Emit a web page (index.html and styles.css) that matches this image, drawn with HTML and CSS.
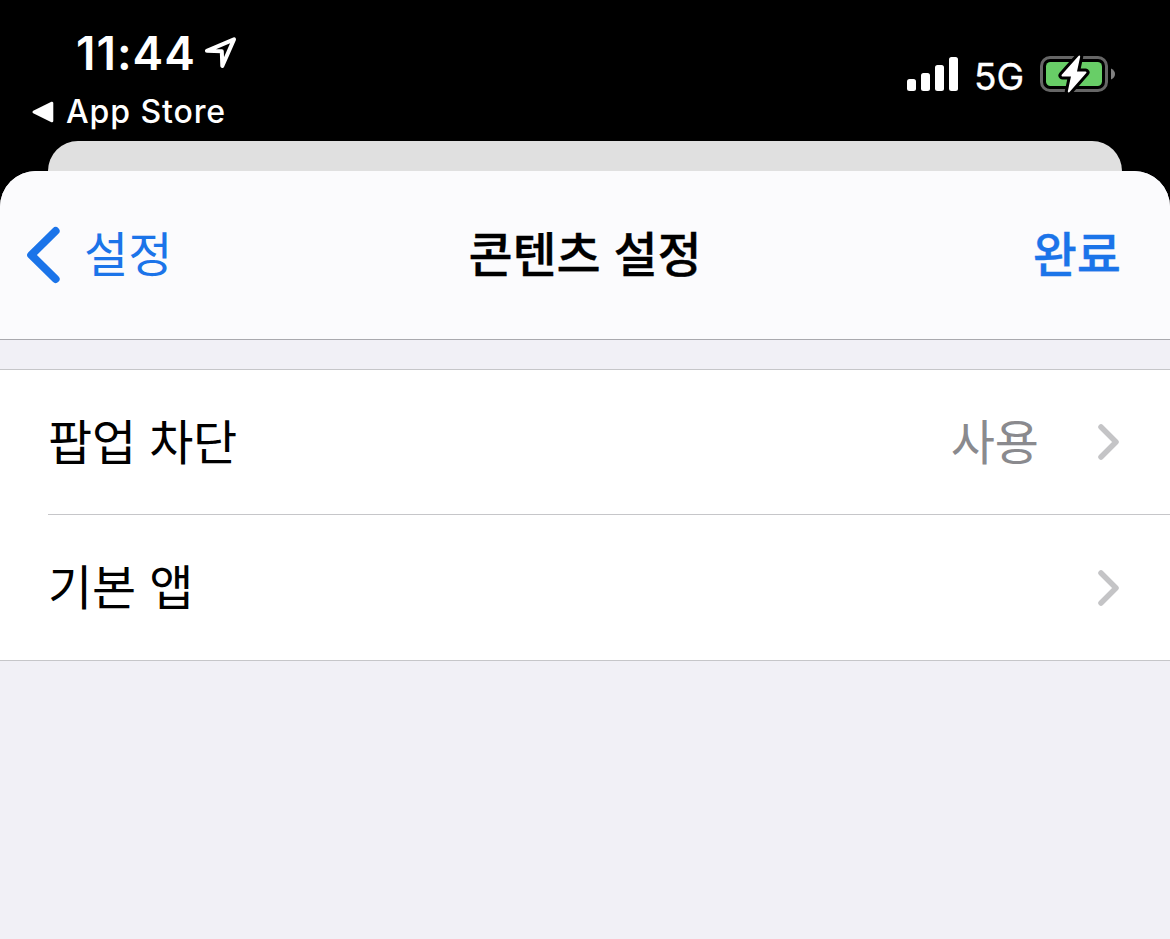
FILE: index.html
```html
<!DOCTYPE html>
<html lang="ko">
  <head>
    <meta charset="UTF-8">
    <title>콘텐츠 설정</title>
    <link rel="stylesheet" href="styles.css">
  </head>
  <body>
    <div class="status-bar">
      <div class="status-left">
        <div class="time-row">
          <span class="time">11:44</span>
          <svg class="location" width="34" height="34" viewBox="0 0 34 34">
            <path d="M2.9 14.8 L30 3.4 L18.3 30 L17.8 15.2 Z" />
          </svg>
        </div>
        <div class="return-app">
          <svg width="22" height="22" viewBox="0 0 22 22">
            <path d="M1.8 11 L20 2 V20 Z" fill="#fff" stroke="#fff" stroke-width="2.6" stroke-linejoin="round" />
          </svg>
          <span>App Store</span>
        </div>
      </div>
      <div class="status-right">
        <svg class="signal" width="52" height="34" viewBox="0 0 52 34">
          <rect x="0" y="22" width="9" height="12" rx="2.5" />
          <rect x="14" y="16" width="9" height="18" rx="2.5" />
          <rect x="28" y="8" width="9" height="26" rx="2.5" />
          <rect x="42" y="0" width="9" height="34" rx="2.5" />
        </svg>
        <span class="network">5G</span>
        <svg class="battery" width="76" height="40" viewBox="0 0 76 40">
          <rect x="1.5" y="3.5" width="65" height="33" rx="8.5" fill="none" stroke="#666" stroke-width="3" />
          <rect x="6" y="8" width="56" height="24" rx="4.5" fill="#68ce67" />
          <path d="M71 14.5 Q75 16.5 75 20 Q75 23.5 71 25.5 Z" fill="#808080" />
          <path class="bolt-edge" d="M39.2 2.6 L22.5 21.4 H32.2 L28.8 37.4 L45.5 18.4 H35.8 Z" />
          <path class="bolt" d="M39.2 2.6 L22.5 21.4 H32.2 L28.8 37.4 L45.5 18.4 H35.8 Z" />
        </svg>
      </div>
    </div>

    <!-- Card behind the sheet -->
    <div class="back-card"></div>

    <div class="sheet">
      <div class="nav">
        <div class="back">
          <svg width="34" height="58" viewBox="0 0 34 58">
            <path d="M29.6 5 L5.2 29 L29.6 53" />
          </svg>
          <span>설정</span>
        </div>
        <h1>콘텐츠 설정</h1>
        <div class="done">완료</div>
      </div>

      <div class="list">
        <div class="row">
          <span class="label">팝업 차단</span>
          <span class="value">사용</span>
          <svg class="chevron" width="22" height="38" viewBox="0 0 22 38">
            <path d="M3 4 L18 19 L3 34" />
          </svg>
        </div>
        <div class="row">
          <span class="label">기본 앱</span>
          <svg class="chevron" width="22" height="38" viewBox="0 0 22 38">
            <path d="M3 4 L18 19 L3 34" />
          </svg>
        </div>
      </div>
    </div>
  </body>
</html>
```

FILE: styles.css
```css
body, h1 {
  margin: 0;
  padding: 0;
}

* {
  box-sizing: border-box;
}

body {
  display: flex;
  flex-direction: column;
  height: 939px;
  overflow: hidden;
  background-color: #000;
  color: #000;
  font-family: "Noto Sans CJK KR", sans-serif;
  font-size: 48px;
}

svg {
  display: block;
  flex-shrink: 0;
}

/* Status bar */
.status-bar {
  display: flex;
  justify-content: space-between;
  height: 141px;
  color: #fff;
  font-family: Inter, sans-serif;
}

.time-row {
  display: flex;
  padding: 24px 0 0 76px;
  height: 84px;
  gap: 10px;
}

.time {
  width: 118px;
  font-size: 46px;
  font-weight: 600;
  line-height: 59px;
  letter-spacing: 1px;
  white-space: nowrap;
}

.location {
  margin-top: 12px;
}

.location path {
  fill: none;
  stroke: #fff;
  stroke-width: 4;
  stroke-linejoin: round;
}

.return-app {
  display: flex;
  align-items: center;
  height: 55px;
  padding-left: 32px;
  gap: 12px;
  font-size: 32px;
  font-weight: 500;
  letter-spacing: 0.9px;
}

.status-right {
  display: flex;
  padding: 54px 54px 0 0;
}

.signal {
  margin-top: 3px;
  fill: #fff;
}

.network {
  width: 65px;
  padding-left: 15px;
  font-size: 37px;
  line-height: 45px;
  -webkit-text-stroke: 0.4px #fff;
}

.battery {
  margin-left: 16px;
}

.bolt {
  fill: #fff;
  stroke: #fff;
  stroke-width: 2;
  stroke-linejoin: round;
}

.bolt-edge {
  stroke: #000;
  stroke-width: 8;
  stroke-linejoin: round;
}

/* Sheet */
.back-card {
  height: 30px;
  margin: 0 48px;
  background-color: #e0e0e0;
  border-radius: 30px 30px 0 0;
}

.sheet {
  flex: 1;
  background-color: #f1f0f6;
  border-radius: 36px 36px 0 0;
  overflow: hidden;
}

.nav {
  display: grid;
  grid-template-columns: 1fr auto 1fr;
  height: 169px;
  padding: 0 49px;
  background-color: #fbfbfd;
  border-bottom: 1px solid #a9a9ae;
  line-height: 160px;
}

.back {
  display: flex;
  gap: 24px;
  margin-left: -23px;
  color: #1b74e9;
}

.back svg {
  margin-top: 55px;
}

.back path {
  fill: none;
  stroke: #1b74e9;
  stroke-width: 8;
  stroke-linecap: round;
  stroke-linejoin: round;
}

h1, .done {
  font-size: 48px;
  font-weight: 500;
  -webkit-text-stroke: 0.3px currentColor;
}

h1 {
  letter-spacing: -0.2px;
}

.done {
  color: #1b74e9;
  text-align: right;
}

/* Settings list */
.list {
  margin-top: 29px;
  background-color: #fff;
  border-top: 1px solid #c6c6c9;
  border-bottom: 1px solid #c6c6c9;
}

.row {
  display: flex;
  height: 144px;
  margin-left: 48px;
  padding-right: 50px;
  line-height: 139px;
}

.row + .row {
  border-top: 1px solid #c6c6c9;
  height: 146px;
}

.label {
  flex: 1;
  letter-spacing: -0.2px;
}

.value {
  margin-right: 59px;
  color: #8a8a8e;
}

.chevron {
  margin-top: 53px;
}

.chevron path {
  fill: none;
  stroke: #c4c4c6;
  stroke-width: 5.5;
  stroke-linecap: round;
  stroke-linejoin: round;
}

/* The second row starts with its separator */
.row + .row .chevron {
  margin-top: 54px;
}
```
